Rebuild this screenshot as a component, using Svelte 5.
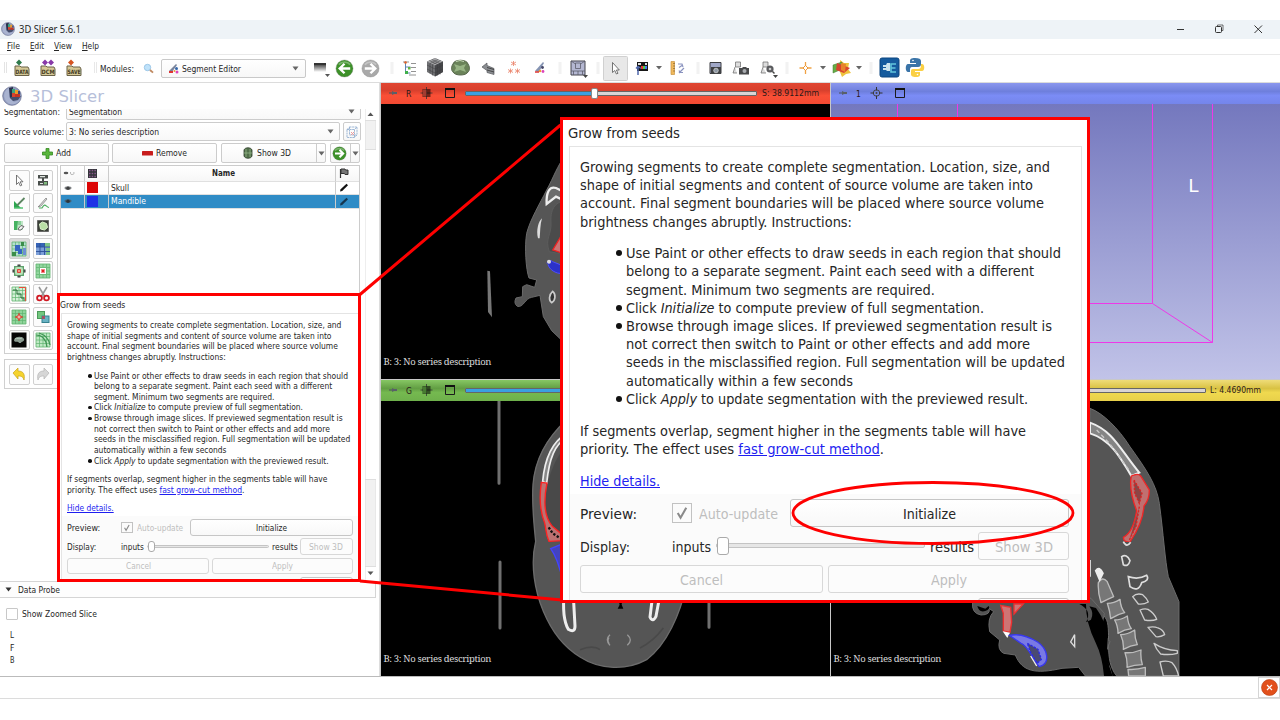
<script>
  const SMALL = 0.5838;

  // Squeezes a run of text horizontally to a given width in pixels.
  function fit(node, width) {
    const natural = node.getBoundingClientRect().width;
    if (!natural) return;
    node.style.transform = `scaleX(${width / natural})`;
    node.style.marginRight = `${width - natural}px`;
  }

  const intro = [
    [470, 'Growing segments to create complete segmentation. Location, size, and'],
    [453, 'shape of initial segments and content of source volume are taken into'],
    [464, 'account. Final segment boundaries will be placed where source volume'],
    [272, 'brightness changes abruptly. Instructions:']
  ];
  const bullets = [
    [435, 'Use Paint or other effects to draw seeds in each region that should', true],
    [408, 'belong to a separate segment. Paint each seed with a different'],
    [309, 'segment. Minimum two segments are required.'],
    [358, 'Click |Initialize| to compute preview of full segmentation.', true],
    [426, 'Browse through image slices. If previewed segmentation result is', true],
    [404, 'not correct then switch to Paint or other effects and add more'],
    [439, 'seeds in the misclassified region. Full segmentation will be updated'],
    [227, 'automatically within a few seconds'],
    [402, 'Click |Apply| to update segmentation with the previewed result.', true]
  ];
  const tools = ['cursor', 'threshold', 'paint', 'draw', 'erase', 'level', 'grow', 'fill', 'margin', 'hollow', 'smooth', 'scissors', 'islands', 'logic', 'mask', 'surface'];
  const segments = [
    { name: 'Skull', color: '#dc0505', w: 18 },
    { name: 'Mandible', color: '#1e32e6', w: 35, sel: true }
  ];
</script>

{#snippet t(text, w)}<span class="t" use:fit={w}>{text}</span>{/snippet}

{#snippet details(u)}
  <div class="details" style="--u:{u}px">
    <div class="d-title">{@render t('Grow from seeds', 112 * u)}</div>
    <div class="d-frame">
      <div class="d-text">
        {#each intro as [w, s]}<div>{@render t(s, w * u)}</div>{/each}
        <div class="d-list">
          {#each bullets as [w, s, dot]}
            <div>{#if dot}<i class="dot"></i>{/if}<span class="t" use:fit={w * u}>{#each s.split('|') as part, i}{#if i === 1}<em>{part}</em>{:else}{part}{/if}{/each}</span></div>
          {/each}
        </div>
        <div>{@render t('If segments overlap, segment higher in the segments table will have', 446 * u)}</div>
        <div><span class="t" use:fit={304 * u}>priority. The effect uses <a href="#method">fast grow-cut method</a>.</span></div>
        <div class="d-hide"><span class="t" use:fit={80 * u}><a href="#details">Hide details.</a></span></div>
      </div>
      <div class="d-row">
        <span class="d-label">{@render t('Preview:', 57 * u)}</span>
        <span class="d-check"><svg viewBox="0 0 19 19"><path d="M5 9.500l3 5L14 4" fill="none" stroke="#8a8a8a" stroke-width="2.200" /></svg></span>
        <span class="d-auto off">{@render t('Auto-update', 79 * u)}</span>
        <span class="d-btn init">{@render t('Initialize', 53 * u)}</span>
      </div>
      <div class="d-row">
        <span class="d-label">{@render t('Display:', 50 * u)}</span>
        {@render t('inputs', 39 * u)}
        <span class="d-slider"><i></i></span>
        <span class="d-res">{@render t('results', 44 * u)}</span>
        <span class="d-btn show off">{@render t('Show 3D', 58 * u)}</span>
      </div>
      <div class="d-row">
        <span class="d-btn cancel off">{@render t('Cancel', 43 * u)}</span>
        <span class="d-btn apply off">{@render t('Apply', 36 * u)}</span>
      </div>
      <div class="d-row last"><span class="d-btn show"></span></div>
    </div>
  </div>
{/snippet}

{#snippet logo(size)}
  <svg width={size} height={size} viewBox="0 0 20 20">
    <circle cx="10" cy="10" r="9.300" fill="#929dc0" stroke="#6d7494" stroke-width=".8" />
    <path d="M3 6a8 8 0 0 1 4-4v9l5 5 6-2a9 9 0 0 1-12 3A9 9 0 0 1 3 6" fill="#a9b3d0" />
    <path d="M7 2l4-1v10l-3 1z" fill="#29304a" /><path d="M8 12l3-2h8l-3 4-5 1z" fill="#454d6b" />
    <path d="M10 7h3v4h-3z" fill="#d6432f" /><path d="M13 4h3v4h-3z" fill="#ec9b28" /><path d="M13 8h5v3h-5z" fill="#c43322" /><path d="M10 3h3v4h-3z" fill="#3aa47d" /><path d="M16 5h2v3h-2z" fill="#3b4878" />
  </svg>
{/snippet}

{#snippet arrowDown()}<svg width="7" height="5" viewBox="0 0 7 5"><path d="M.5.5h6L3.500 4.500z" fill="#666" /></svg>{/snippet}

{#snippet grid(c)}
  <rect x="2" y="2" width="14" height="14" fill={c} /><path d="M2 5.500h14M2 9h14M2 12.500h14M5.500 2v14M9 2v14M12.500 2v14" stroke="#5fb470" stroke-width=".7" /><path d="M2 2h14v14H2z" fill="none" stroke="#5fb470" stroke-width=".8" />
{/snippet}

{#snippet toolIcon(n)}
  <svg width="18" height="18" viewBox="0 0 18 18">
    {#if n === 'cursor'}<path d="M6.500 4v9.500l2.200-2.200 1.600 3.600 1.500-.7-1.600-3.400h2.800z" fill="#fff" stroke="#555" stroke-width=".8" />
    {:else if n === 'threshold'}<path d="M4 4h10v3.500H4zM4 10h10v4.500H4zM8 7h2v3H8z" fill="#4a4f4c" /><path d="M6 5.700h5M6 12.500h3" stroke="#dfe4df" stroke-width="1.200" /><path d="M10 11h3v2.500h-3z" fill="#7fba7d" />
    {:else if n === 'paint'}<path d="M4 7v7h7z" fill="#2ca64f" /><path d="M7 11.500L14.500 4" stroke="#5d8662" stroke-width="1.800" /><path d="M4 14h9" stroke="#56c374" stroke-width="1.500" />
    {:else if n === 'draw'}<path d="M5 12l7-8 1 1-6 7-3 1z" fill="#ddd" stroke="#777" stroke-width=".7" /><path d="M5 14h3c3-6 4-1 7-.5" fill="none" stroke="#4fae62" stroke-width="1.200" />
    {:else if n === 'erase'}<path d="M4 4h9v9H4z" fill="#bfe6c7" /><path d="M4 4h4l-1 9H4z" fill="#46b261" /><path d="M8 4h3v4H8z" fill="#86cf97" /><path d="M8 12l3-3.500 3 1-3 3.500H8.500z" fill="#f2f2f2" stroke="#444" stroke-width=".8" />
    {:else if n === 'level'}<path d="M3.500 3.500h11v11h-11z" fill="#3b4138" stroke="#333" stroke-dasharray="1 1" /><path d="M5.500 7l3-2 4 1.500 1 4-3 2.500-4-1z" fill="#b9e0a5" stroke="#dff3cf" />
    {:else if n === 'grow'}{@render grid('#b5dfd0')}<path d="M5 5h5v4h2v5H8v-3H5z" fill="#3565c0" /><path d="M11 2h3v4h-3zM2 12h4v4H2z" fill="#3b8d4a" /><path d="M13 8h3v7h-3z" fill="#6c8fd4" />
    {:else if n === 'fill'}<path d="M2 3h14v4H2z" fill="#3563b6" /><path d="M2 7h14v8H2z" fill="#7c9fd8" /><path d="M10 3h6v4h-6zM12 8h4v7h-4z" fill="#7fc488" /><path d="M2 7h14M2 11.500h14M6 3v12M10.500 3v12" stroke="#2a5098" stroke-width=".9" />
    {:else if n === 'margin'}<rect x="4.500" y="4.500" width="9" height="9" fill="#b5e4b7" stroke="#5ba66b" /><path d="M9 2.500v2M9 13.500v2M2.500 9h2M13.500 9h2" stroke="#333" stroke-width="3" /><circle cx="9" cy="9" r="5" fill="none" stroke="#6b9473" stroke-width=".7" /><path d="M7.500 7.500h3v3h-3z" fill="#ef9887" stroke="#d22" stroke-width=".8" />
    {:else if n === 'hollow'}{@render grid('#92d69f')}<rect x="5.500" y="5.500" width="7" height="7" fill="#fff" stroke="#6ebc7b" /><path d="M7.500 7.500l3 3M10.500 7.500l-3 3" stroke="#e01c1c" stroke-width="1.500" />
    {:else if n === 'smooth'}{@render grid('#d5f0d8')}<path d="M3 5h4v4h4v4h3v3" fill="none" stroke="#2b6c3b" /><path d="M9 2.500h6.500V16" fill="none" stroke="#ee4a3a" />
    {:else if n === 'scissors'}<path d="M5 2l6 10M13 2L7 12" stroke="#999" stroke-width="1.600" /><circle cx="5.500" cy="13" r="2.400" fill="none" stroke="#d01822" stroke-width="1.800" /><circle cx="12.500" cy="13" r="2.400" fill="none" stroke="#d01822" stroke-width="1.800" />
    {:else if n === 'islands'}{@render grid('#8fd49a')}<path d="M9 5v8M5 9h8" stroke="#e12a1e" /><path d="M9 6.500l2.500 2.500L9 11.500 6.500 9z" fill="#f7b1a6" stroke="#e12a1e" />
    {:else if n === 'logic'}<rect x="3.500" y="3.500" width="7" height="7" fill="#72c67e" stroke="#4a9a58" /><rect x="8" y="8" width="7" height="6.500" fill="#69b3c4" stroke="#35818f" /><path d="M8 8h3v3H8z" fill="#a25264" />
    {:else if n === 'mask'}<rect x="1.500" y="1.500" width="15" height="15" fill="#060606" /><path d="M4 9c1-4 9-4 10-1 1 3-3 2-3 4H9c0-2-5 0-5-3" fill="#8a9a90" /><path d="M5 8c2-2 4 1 7-1" stroke="#b3c9b9" fill="none" />
    {:else}{@render grid('#bfe8c4')}<path d="M2 4c6 0 10 4 11 12M5 2c6 2 10 6 11 12" fill="none" stroke="#3f9453" stroke-width="1.200" />{/if}
  </svg>
{/snippet}

{#snippet greenArrow(size, c, flip)}
  <svg width={size} height={size} viewBox="0 0 20 20"><circle cx="10" cy="10" r="9" fill={c} stroke="#77777755" /><path d="M4 6a8 8 0 0 1 12 0" stroke="#ffffff50" stroke-width="2" fill="none" /><g transform={flip ? 'matrix(-1 0 0 1 20 0)' : ''}><path d="M4 10h11M10 5l5 5-5 5" fill="none" stroke="#fff" stroke-width="2.600" /></g></svg>
{/snippet}

{#snippet viewIcons(letter, color)}
  <svg class="v-icons" width="80" height="20" viewBox="0 0 80 20">
    <path d="M8 10h4" stroke="#4b5158" /><path d="M11 8v4l2-1h3V9h-3z" fill="#596069" />
    <text x="25" y="13.800" font-size="8.500" fill="#2a1818">{letter}</text>
    {#if letter === '1'}
      <circle cx="45.500" cy="10" r="3.200" fill="none" stroke="#444" /><path d="M45.500 4v3.500M45.500 12.500V16M39.500 10H43M48 10h3.500" stroke="#333" /><circle cx="45.500" cy="10" r="1" fill="#444" />
    {:else}
      <path d="M45.500 4v12M39.500 10h12" stroke="#333" stroke-width=".8" /><path d="M41.500 6h8v8h-8z" fill="#00000088" /><path d="M42 6.500h3.500v7H42z" fill={color} />
    {/if}
    <path d="M64.500 5.500h9v9h-9z" fill="none" stroke="#1b1b1b" /><path d="M64 6h10" stroke="#111" stroke-width="2" />
  </svg>
{/snippet}

<div class="app">
  <header class="title">
    <span class="title-logo">{@render logo(14)}</span>
    {@render t('3D Slicer 5.6.1', 62)}
    <svg class="win" width="100" height="18" viewBox="0 0 100 18" fill="none" stroke="#333"><path d="M0 9.500h7" /><rect x="38.500" y="6.500" width="6" height="6" rx="1" /><path d="M40.500 6V5h5.500v5.500h-1" stroke-width=".7" /><path d="M77.500 5.500l7.500 7.500M85 5.500l-7.500 7.500" /></svg>
  </header>
  <nav class="menu">
    <span class="t" use:fit={13}><u>F</u>ile</span><span class="t" use:fit={14}><u>E</u>dit</span><span class="t" use:fit={18}><u>V</u>iew</span><span class="t" use:fit={17}><u>H</u>elp</span>
  </nav>
  <div class="toolbar">
    <svg width="98" height="27" viewBox="0 55 98 27" class="files">
      <path d="M4.500 62v11M6.500 62v11" stroke="#e4e4e4" />
      {#each [[15, 'DATA', '#2f7a4c', 0], [41, 'DCM', '#8839a8', 1], [67, 'SAVE', '#d65522', 0]] as [x, label, c, two]}
        <path d="M{x} 66h5l1 1h7l1 2v6.500H{x}z" fill="#d5c896" stroke="#6b6348" />
        <path d="M{x + 4} 59.500l3 3-3 3-3-3z" fill={c} />
        {#if two}<path d="M{x + 10} 59.500l3 3-3 3-3-3z" fill={c} />{/if}
        <text x={x + .5} y="74.200" font-size="6" font-weight="bold" textLength="13" lengthAdjust="spacingAndGlyphs" fill="#3e3822">{label}</text>
      {/each}
      <path d="M94.500 62v11M96.500 62v11" stroke="#e8e8e8" />
    </svg>
    <span class="modules">{@render t('Modules:', 34)}</span>
    <svg width="12" height="12" viewBox="0 0 12 12"><circle cx="4.500" cy="4.500" r="3.200" fill="#bfe2fa" stroke="#9bc7e8" /><path d="M7 7l3 2.700" stroke="#c08a62" stroke-width="1.800" /></svg>
    <div class="module-combo">
      <svg width="11" height="11" viewBox="0 0 11 11"><path d="M1 8l7-7 1 1-5 7z" fill="#78839c" /><path d="M1 9h4" stroke="#d33" stroke-width="2" /><circle cx="8.500" cy="5.500" r="1.500" fill="#36a" /><circle cx="9" cy="9" r="1.500" fill="#d4b" /><circle cx="6.500" cy="8" r="1" fill="#e93" /></svg>
      {@render t('Segment Editor', 59)}
      <span class="push">{@render arrowDown()}</span>
    </div>
    <svg width="28" height="27" viewBox="306 55 28 27"><defs><linearGradient id="hist" x2="0" y2="1"><stop offset="0" stop-color="#222" /><stop offset="1" stop-color="#fff" /></linearGradient></defs><path d="M314 63h12v9h-12z" fill="url(#hist)" /><path d="M314 63h12v2h-12z" fill="#333" /><path d="M325 74h5l-2.500 3z" fill="#555" /></svg>
    <span class="round">{@render greenArrow(19, '#3d9129', true)}</span>
    <span class="round two">{@render greenArrow(19, '#a9a9a9', false)}</span>
    <svg width="545" height="27" viewBox="384 55 545 27" class="icons">
      <path d="M392 62v12M560 62v12M598 62v12M698 62v12M787 62v12M871 62v12" stroke="#f2f2f2" stroke-width="3" />
      <!-- data tree -->
      <path d="M405.500 62v11h5M405.500 67h5" stroke="#5c84b2" fill="none" /><path d="M403 62h6M411 63.500h5M411 67.500h5M411 71.500h5M409 75h7" stroke="#777" stroke-width=".8" /><path d="M408 67h2.500v2.500H408z" fill="#62b43e" /><path d="M405 71h3v3h-3z" fill="#3fb04a" /><circle cx="405.500" cy="62.500" r="1.300" fill="#e0622b" />
      <!-- volume cube -->
      <path d="M435 58l8 3.500v10.500l-8 4.500-8-4.500V61.500z" fill="#6f7073" /><path d="M435 58l8 3.500-8 4-8-4z" fill="#a4a5a7" /><path d="M435 65.500v11l8-4.500V61.500z" fill="#46474a" /><path d="M429.500 60.500l8 4v11M432 59.500l8 4v11M427 65l8 4 8-4M427 69l8 4 8-4M440.500 60.500l-8 4v11M438 59.500l-8 4v10" stroke="#3a3b3d" stroke-width=".5" fill="none" />
      <!-- model -->
      <path d="M453 64c1-5 14-5 15 0 2 3 2 6 0 8-2 4-13 4-15 0-2-2-2-5 0-8z" fill="#6a8359" stroke="#56664b" /><path d="M454 64l6 2 6-2-2 4 2 4-6-2-6 2 2-4z" fill="#a3c18f" opacity=".8" /><path d="M456 61.500q4-2 8 0" stroke="#c9ddba" fill="none" />
      <!-- transforms -->
      <path d="M482 67l5-4v2.500l7 3v6l-7-2v-2z" fill="#8b8e92" stroke="#56585c" stroke-width=".7" /><path d="M487 67.500l7 2M487 70l7 2" stroke="#333" stroke-width=".8" />
      <!-- markups -->
      <path d="M513.500 61v5M511 62l5 3M511 65l5-3M510.500 68.500v5M508 69.500l5 3M508 72.500l5-3M517.500 68.500v5M515 69.500l5 3M515 72.500l5-3" stroke="#ea8067" stroke-width=".8" />
      <!-- segment editor -->
      <path d="M535 71l8-9 1 1-5 9z" fill="#8594b3" /><path d="M535 72h4" stroke="#d33" stroke-width="1.500" /><circle cx="542.500" cy="67.500" r="1.400" fill="#446" /><circle cx="543" cy="71.500" r="1.400" fill="#d4b" /><circle cx="540" cy="71" r="1.300" fill="#e93" />
      <!-- layout -->
      <path d="M571 61h14v14h-14z" fill="#b4b7d2" stroke="#44454e" /><path d="M573.500 71v4M582.500 71v4M578 71v4M571 71h14M575.500 63h5v5.500h-5zM571 61l4.500 3M585 61l-4.500 3" stroke="#5c5d6b" stroke-width=".8" fill="none" /><path d="M583 75h5l-2.500 3z" fill="#444" />
      <!-- mouse mode -->
      <rect x="603.500" y="56.500" width="24" height="24" rx="1" fill="#e8e8e8" stroke="#d0d0d0" /><path d="M612.500 62.500v10l2.300-2 1.600 3.500 1.600-.7-1.600-3.300h2.900z" fill="#fff" stroke="#555" stroke-width=".8" />
      <!-- window level -->
      <path d="M637 62h11v9h-11z" fill="#161616" /><path d="M638 63h3v2h-3zM645 63h2v2h-2z" fill="#ddd" /><path d="M641 66h2v3h-2z" fill="#e33" /><path d="M643 66h2v3h-2z" fill="#5c4" /><path d="M645 66h2v3h-2z" fill="#47e" /><path d="M638 67v8M636 68.500l2-2 3 2" stroke="#5068ac" stroke-width="1.500" fill="none" /><path d="M656 66h6l-3 3.500z" fill="#666" />
      <!-- ruler -->
      <path d="M671 61.500h3.500v13H671z" fill="#f0b95c" stroke="#c99440" stroke-width=".7" /><path d="M673 63.500h2M673 66h2M673 68.500h2M673 71h2" stroke="#8a6731" stroke-width=".7" /><path d="M678 64h4l1 3M683 72.500h-3l-1-2M679 67.500l3-2M679 73l5-5" stroke="#8a93bf" stroke-width="1.200" fill="none" />
      <!-- capture -->
      <path d="M710 62.500h11v11h-11z" fill="#a0a7c7" stroke="#3c3d41" /><path d="M711 67h10v7h-10z" fill="#3e4043" /><circle cx="716" cy="70.500" r="2.300" fill="#8f99a5" stroke="#ddd" stroke-width=".7" />
      <!-- scene views -->
      <path d="M735.500 62h5v5h-5zM735 67l-2 6h4" fill="#ddd" stroke="#666" stroke-width=".7" /><path d="M739 68h3l1-1h3l1 1h2v6.500h-10z" fill="#48494b" /><circle cx="744.500" cy="71" r="2" fill="#a9acb0" />
      <path d="M763 62h5v5h-5zM763 67l-2 6h5" fill="#ddd" stroke="#666" stroke-width=".7" /><circle cx="770" cy="69" r="3.600" fill="#5a5b5e" /><circle cx="770" cy="69" r="1.300" fill="#ccc" /><path d="M772.500 71.500l2 2" stroke="#444" stroke-width="1.500" /><path d="M773 75h5l-2.500 3z" fill="#444" />
      <!-- crosshair -->
      <path d="M805.500 62v12M799.500 68h12" stroke="#f0a244" stroke-width="1.300" /><path d="M805.500 65.500l2.500 2.500-2.500 2.500-2.500-2.500z" fill="#fff" stroke="#eb8f26" stroke-width=".9" /><path d="M820 66h6l-3 3.500z" fill="#666" />
      <!-- slice cube -->
      <path d="M840 60l4 3 5 0-1 6 3 4-5 1-4 3-2-5z" fill="#eec23d" /><path d="M833 65l9-3v7l-9 4z" fill="#66ad45" stroke="#417b32" stroke-width=".5" /><path d="M837 63l13 5-6 5-8-3z" fill="#d8442f" /><path d="M841 63l5 1-1 8-4-2z" fill="#e7832c" /><path d="M856 66h6l-3 3.500z" fill="#666" />
      <!-- extensions -->
      <rect x="880" y="58" width="19" height="19" rx="2" fill="#155b9e" stroke="#0d4680" /><path d="M883 65h3l1-2h3v8h-3l-1-1h-3v-2h3v-1h-3z" fill="#cbe4ee" /><path d="M896 64h-5v8h5M891 68h4.500" stroke="#61c6dc" stroke-width="1.600" fill="none" />
      <!-- python -->
      <path d="M915 58c-4 0-5 1-5 3v2h6v1h-8c-3 0-3 8 0 8h2v-2c0-3 1-3 3-3h5c2 0 3-1 3-3v-3c0-2-2-3-6-3z" fill="#3a74a8" /><path d="M916 77c4 0 4-1 4-3v-2h-5v-1h7c3 0 3-7 0-7h-1v2c0 2-1 3-3 3h-5c-2 0-2 1-2 3v2c0 2 1 3 5 3z" fill="#fbd044" /><circle cx="913" cy="60.500" r=".8" fill="#fff" /><circle cx="917.500" cy="74.500" r=".8" fill="#fff" />
    </svg>
  </div>

  <main>
    <aside>
      <div class="brand">{@render logo(20)}<span class="brand-name">{@render t('3D Slicer', 74)}</span></div>
      <div class="scroll">
        <div class="panel">
          <div class="seg-row"><span class="lbl">{@render t('Segmentation:', 56)}</span><div class="combo clip">{@render t('Segmentation', 53)}<span class="push">{@render arrowDown()}</span></div></div>
          <div class="src-row"><span class="lbl">{@render t('Source volume:', 60)}</span><div class="combo">{@render t('3: No series description', 90)}<span class="push">{@render arrowDown()}</span></div>
            <div class="btn geo"><svg width="12" height="12" viewBox="0 0 12 12" fill="none"><path d="M1 3.500h7.500v8H1zM3.500 1H11v8l-2.500 2.500M1 3.500L3.500 1M8.500 3.500L11 1M3.500 1v8H11" stroke="#86a6cc" stroke-width=".8" stroke-dasharray="2 .6" /><path d="M5 6l3 3M8 6L5 9" stroke="#e99" /></svg></div></div>
          <div class="actions">
            <div class="btn add"><svg width="11" height="11" viewBox="0 0 11 11"><path d="M4 .5h3V4h3.500v3H7v3.500H4V7H.5V4H4z" fill="#59b53c" stroke="#358a22" stroke-width=".8" /></svg>{@render t('Add', 15)}</div>
            <div class="btn remove"><svg width="11" height="5" viewBox="0 0 11 5"><rect width="11" height="4.500" rx=".6" fill="#c81d1d" /></svg>{@render t('Remove', 31)}</div>
            <div class="btn show3d"><span class="show3d-in"><svg width="10" height="12" viewBox="0 0 10 12"><path d="M1 3c1-3 7-3 8 0v6c-1 3-7 3-8 0z" fill="#52704a" stroke="#2f3d2b" stroke-width=".8" /><path d="M3 2v8M7 2v8M1 6h8" stroke="#9cbb90" stroke-width=".7" /></svg>{@render t('Show 3D', 34)}</span><span class="drop">{@render arrowDown()}</span></div>
            <div class="btn go"><span class="go-in">{@render greenArrow(15, '#3d9129', false)}</span><span class="drop">{@render arrowDown()}</span></div>
          </div>
          <div class="editor">
            <div class="palette">
              <div class="tools">{#each tools as n}<div class="tool" class:on={n === 'grow'}>{@render toolIcon(n)}</div>{/each}</div>
              <div class="history">
                <div class="tool"><svg width="18" height="18" viewBox="0 0 18 18"><path d="M3 8l5-5v3c6 0 7 4 6 9-1-3-2-4-6-4v3z" fill="#f5d32e" stroke="#c9a417" stroke-width=".7" /></svg></div>
                <div class="tool"><svg width="18" height="18" viewBox="0 0 18 18"><path d="M15 8l-5-5v3c-6 0-7 4-6 9 1-3 2-4 6-4v3z" fill="#d6d6d6" stroke="#b5b5b5" stroke-width=".7" /></svg></div>
              </div>
            </div>
            <div class="table">
              <div class="tr th">
                <span><svg width="13" height="8" viewBox="0 0 13 8"><ellipse cx="3" cy="4" rx="2.300" ry="1.300" fill="#555" /><path d="M7.500 3v1.500q0 1 1.700 1t1.700-1V3" fill="none" stroke="#999" stroke-width=".7" /></svg></span>
                <span><svg width="9" height="9" viewBox="0 0 9 9"><path d="M0 0h9v9H0z" fill="#33353a" /><path d="M1 1.500h7M1 4.500h7M1 7.500h7" stroke="#8a5a8c" stroke-dasharray="1.500 1.200" stroke-width="1.300" /></svg></span>
                <span class="name"><b class="t" use:fit={23}>Name</b></span>
                <span class="st"><svg width="10" height="10" viewBox="0 0 10 10"><path d="M1.500 1v9" stroke="#333" stroke-width="1.200" /><path d="M2 1h4l.5 1H9v4.500H6L5.500 5.500H2z" fill="#777" stroke="#333" /></svg></span>
              </div>
              {#each segments as s}
                <div class="tr" class:sel={s.sel}>
                  <span class="eye"><svg width="8" height="6" viewBox="0 0 8 6"><ellipse cx="4" cy="3" rx="3.500" ry="1.800" fill="#4a4e52" opacity=".7" /><circle cx="4" cy="3.200" r="1.700" fill="#222" opacity=".7" /></svg></span>
                  <span class="sw"><i style="background:{s.color}"></i></span>
                  <span class="cell">{@render t(s.name, s.w)}</span>
                  <span class="st"><svg width="10" height="9" viewBox="0 0 10 9"><path d="M1 8.500l.6-2.200L7.500.8 9 2.200 3.200 7.900z" fill={s.sel ? '#143650' : '#111'} /></svg></span>
                </div>
              {/each}
            </div>
          </div>
        </div>
        <div class="bar"><svg width="11" height="472" viewBox="0 0 11 472"><path d="M0 0v472" stroke="#ddd" /><path d="M2.500 7h6L5.500 3.500z" fill="#555" /><path d="M0 11.500h11v29H0zM0 370.500h11v87H0z" fill="#f1f1f1" stroke="#dedede" /><path d="M2.500 462.500h6l-3 3.500z" fill="#555" /></svg></div>
      </div>
      <div class="probe"><svg width="7" height="5" viewBox="0 0 7 5"><path d="M.5.5h6l-3 4z" fill="#333" /></svg>{@render t('Data Probe', 42)}</div>
      <div class="zoomed"><i></i>{@render t('Show Zoomed Slice', 75)}</div>
      <div class="lfb"><div>{@render t('L', 4)}</div><div>{@render t('F', 4.5)}</div><div>{@render t('B', 4.5)}</div></div>
    </aside>

    <section class="views">
      <div class="view">
        <div class="vbar red">{@render viewIcons('R', '#a33c30')}<span class="track"><i class="fillr"></i><i class="knob"></i></span>{@render t('S: 38.9112mm', 57)}</div>
        <svg class="scene" width="449" height="275" viewBox="381 104 449 275">
          <rect x="381" y="104" width="449" height="275" />
          <g transform="translate(380 80) scale(.33333)">
            <path d="M560 220C530 260 522 290 500 330C480 370 450 420 440 460 433 500 438 570 447 594L470 600 464 622 440 614 428 620 427 650 408 654Q400 670 412 679C430 684 435 655 455 652L480 646 490 710 515 752 560 795z" fill="#565656" stroke="#6a6a6a" stroke-width="3" />
            <path d="M560 365c-30-5-50 20-47 60s-20 50-5 90l52 10z" fill="#4b4b4b" stroke="#5c5c5c" stroke-width="3" />
            <path d="M500 372c-2-38 10-54 28-48l30 15v25l-30-14z" fill="#6c6c6c" stroke="#eee" stroke-width="7" />
            <path d="M474 475c-6-25 1-50 12-60-6 20-5 40-7 60z" fill="#ddd" />
            <path d="M518 510l30-50v60z" fill="#cd7474" stroke="#e22" stroke-width="4" />
            <path d="M500 549q10-12 18-4l30 12v24c-22 0-40-12-44-28" fill="#2c32c9" stroke="#4c4cff" stroke-width="3" /><circle cx="507" cy="545" r="6" fill="#ddd" />
            <path d="M518 634c-12 10-12 28-3 34 12-6 13-26 3-34z" fill="#333" stroke="#ccc" stroke-width="5" />
            <path d="M322 572l8 2 6 138-12-16z" fill="#777" />
          </g>
          <text x="383.500" y="365" class="vtext" textLength="108">B: 3: No series description</text>
        </svg>
      </div>
      <div class="view">
        <div class="vbar blue">{@render viewIcons('1', '')}</div>
        <svg class="scene" width="449" height="275" viewBox="831 104 449 275">
          <defs><linearGradient id="sky" x2="0" y2="1"><stop offset="0" stop-color="#7478be" /><stop offset="1" stop-color="#c1c3e8" /></linearGradient></defs>
          <rect x="831" y="104" width="449" height="275" fill="url(#sky)" />
          <path d="M897.500 104v160M957.500 104v160M1152.500 104v199.500H957M1212.500 104v238.500H897M1152.500 303.500l60 39" fill="none" stroke="#ee38e8" />
          <text x="1188.500" y="191.500" font-size="19" fill="#fff" class="orient">L</text>
        </svg>
      </div>
      <div class="view">
        <div class="vbar green">{@render viewIcons('G', '#477a31')}<span class="track"><i class="fillg"></i></span></div>
        <svg class="scene" width="449" height="275" viewBox="381 401 449 275">
          <rect x="381" y="401" width="449" height="275" />
          <g transform="translate(380 378) scale(.33333)">
            <path d="M560 125C500 180 465 240 459 320 455 380 462 440 467 490 450 560 465 640 490 700 515 760 555 810 600 837 660 876 740 878 800 845 860 800 900 710 920 620V80z" fill="#555" stroke="#6c6c6c" stroke-width="4" />
            <path d="M560 205c-35 30-60 100-64 160s15 100 50 110h50V180z" fill="#494949" />
            <path d="M560 180c-35 18-52 60-60 135l-12-4c6-70 30-120 72-145" fill="#888" stroke="#eee" stroke-width="5" />
            <path d="M484 313l17 2c-10 50-10 100 16 130l30 25v18l-40 2c-10-20-8-35-13-55-16-40-16-80-10-122z" fill="#bd7272" stroke="#f22" stroke-width="4" />
            <path d="M506 448l12 18 22 14" stroke="#111" stroke-width="7" stroke-dasharray="7 5" fill="none" />
            <path d="M512 512l40-16v120c-15-50-22-80-40-104z" fill="#4343bf" stroke="#44f" stroke-width="4" />
            <path d="M553 640c-5 50-2 90 12 114q20 12 20-10l-5-90M842 640l-14 75q-10 20-18 2l8-65 10-30" fill="none" stroke="#eee" stroke-width="9" />
            <path d="M715 665l4 15-6 12h17l-5-12 2-15z" fill="#000" /><path d="M690 770q-16 14 0 32M742 770q18 16 0 32M687 778q-6 10 0 18" fill="none" stroke="#999" stroke-width="4" />
            <path d="M600 815q40-15 60 0M780 810q40-20 70-60" fill="none" stroke="#494949" stroke-width="5" />
            <path d="M357 68v248M360 552v198M987 650v98" stroke="#707070" stroke-width="9" stroke-linecap="round" />
          </g>
          <text x="383.500" y="662" class="vtext" textLength="108">B: 3: No series description</text>
        </svg>
      </div>
      <div class="view">
        <div class="vbar yellow"><span class="track"></span>{@render t('L: 4.4690mm', 51)}</div>
        <svg class="scene" width="449" height="275" viewBox="831 401 449 275">
          <rect x="831" y="401" width="449" height="275" />
          <g transform="translate(930 400) scale(.33333)">
            <path d="M480 25C520 40 565 85 600 140 650 210 680 255 688 310 700 400 705 480 715 530L747 605V828H560C520 780 545 700 530 660 515 630 490 610 470 580z" fill="#555" stroke="#6b6b6b" stroke-width="3" />
            <path d="M128 605q-5 35 25 40 30 0 24-20l14 10q-20 20-12 60l30 25q-8 30 12 40l35 5c20 50 60 58 140 40l50-3 20 26h80q-5-30-18-48-2-30 12-55l-22-25q-5-30 5-60l-40-45z" fill="#535353" stroke="#6a6a6a" stroke-width="3" />
            <path d="M480 68c70 25 90 80 148 150l-24 10c-35-60-65-110-124-128z" fill="#858585" stroke="#eee" stroke-width="6" /><path d="M500 90l40 42 60 82" stroke="#c8c8c8" stroke-width="4" stroke-dasharray="12 8" fill="none" />
            <path d="M604 228q20-10 28 0l26 42q0 30-16 48-3 50-42 108-20 2-20-14 30-15 40-80-20-50-18-90z" fill="#c07070" stroke="#ef2626" stroke-width="4" /><path d="M612 240l24 40-8 30-14-30zM628 320l-10 60-20 40" fill="#8c4444" stroke="#d22" stroke-width="4" stroke-dasharray="6 5" />
            <path d="M580 425q10 20 22 2M575 470q15-10 25 12-5 20-20 12zM595 530q30 10 55-4 10 15-15 22-10 30-35 12z" fill="#505050" stroke="#ddd" stroke-width="5" />
            <g fill="#777" stroke="#bdbdbd" stroke-width="4" stroke-linejoin="round"><path d="M505 548q12-20 26-4l20 46q-18 8-38 18-10-30-8-60zM532 610q20 0 38-12 2 25 14 40-20 4-42 18-2-22-10-46zM554 660q20 0 38-12 2 25 12 38-20 2-40 14 0-22-10-40zM572 704q20 0 42-14 0 25 8 44-20 2-42 14 2-22-8-44zM585 758q24 2 48-8-2 25 4 44-24 0-46 8 2-22-6-44zM594 808q24 2 52-6v26h-50z" /><path d="M608 590q12-12 30-6 12 10 17 22-14 8-30 6zM630 630q14-6 24-2 20 12 26 30-14 6-36 2zM654 682q18-4 30 2 16 6 20 20-14 8-26 6zM672 730q30 20 70 22v8q-24 6-50 2-14-14-20-32zM690 786q20-6 36 2 14 14 20 40h-46z" fill="#505050" stroke="#ccc" /></g>
            <path d="M497 512q12-16 22 8l-10 20zM480 480v50" fill="#eee" stroke="#eee" stroke-width="5" />
            <path d="M448 612q40 20 20 55l15-8q10-20-5-40l20 5q30 40 35 90-8 60 15 114h-26q-5-60-25-100-30-60-29-116z" fill="#000" />
            <path d="M212 616l30 6 3 45-5 30-20-4V640zM252 612h28l-28 30z" fill="#cf7474" stroke="#ee3030" stroke-width="4" /><path d="M218 694l22 4-8 16z" fill="#fff" />
            <path d="M238 706c30-6 60 5 85 20 30 20 40 65 5 74-15-15-35-65-55-70z" fill="#7979e5" stroke="#3838ef" stroke-width="4" /><path d="M292 730l32 18 10 30-12 12-20-32z" fill="#4a4a72" stroke="#2929e8" stroke-width="4" stroke-dasharray="7 4" /><path d="M302 768l18 30" stroke="#eee" stroke-width="4" />
            <path d="M434 704l-12 22 12 14z" fill="none" stroke="#ddd" stroke-width="4" /><path d="M142 618q5 22 26 14 14-6 8-14l-10 8z" fill="#000" />
          </g>
          <text x="833.500" y="662" class="vtext" textLength="108">B: 3: No series description</text>
        </svg>
      </div>
    </section>
  </main>
  <footer><div class="err"><svg width="17" height="17" viewBox="0 0 17 17"><circle cx="8.500" cy="8.500" r="8" fill="#e2501b" stroke="#b23d12" stroke-width=".6" /><path d="M6 6l5 5M11 6l-5 5" stroke="#fff" stroke-width="1.200" /></svg></div></footer>

  <div class="source-box">{@render details(SMALL)}</div>
  <div class="callout">{@render details(1)}</div>
  <svg class="marks" width="1280" height="720" fill="none" stroke="#fe0000"><path d="M360 294.500L560.500 125M360 581L562 600" stroke-width="3" /><ellipse cx="933" cy="513" rx="140" ry="30.500" stroke-width="2.800" /></svg>
</div>

<style>
  :global(body) { background: #fff; }
  .app { position: relative; width: 1280px; height: 720px; padding-top: 20px; box-sizing: border-box; overflow: hidden; background: #fff; color: #262626; font: 8.4px/12px 'DejaVu Sans Condensed', 'DejaVu Sans', sans-serif; }
  svg { display: block; flex: none; }
  .t { display: inline-block; white-space: pre; transform-origin: 0 50%; flex: none; }
  .push { margin-left: auto; }
  .title { display: flex; align-items: center; height: 18.500px; background: #eef3f7; font: 10.200px 'Noto Sans', sans-serif; }
  .title-logo { margin: 0 4px 0 1px; }
  .win { margin-left: auto; margin-right: 3px; }
  .menu { display: flex; align-items: center; gap: 10px; height: 15.500px; padding-left: 7px; }
  u { text-underline-offset: 1px; }
  .toolbar { display: flex; align-items: center; height: 27px; border-top: 1px solid #e9e9e9; border-bottom: 1px solid #dcdcdc; }
  .modules { width: 34px; margin: 0 9px 0 2px; }
  .module-combo { display: flex; align-items: center; gap: 3px; box-sizing: border-box; width: 145px; height: 19px; margin-left: 6px; padding: 0 6px; border: 1px solid #c9c9c9; border-radius: 2px; background: linear-gradient(#fff, #f7f7f7); }
  .round { margin: 0 0 1px 1px; }
  .round.two { margin: 0 4px 1px 7px; }
  main { display: flex; height: 593px; }
  aside { width: 380px; box-sizing: border-box; border-right: 1px solid #ddd; flex: none; }
  .brand { display: flex; align-items: center; gap: 8px; height: 26px; padding-left: 2px; color: #b7bfda; font: 16.5px 'DejaVu Sans', sans-serif; }
  .scroll { display: flex; height: 472px; overflow: hidden; }
  .panel { width: 356.500px; padding-left: 4px; flex: none; overflow: hidden; }
  .bar { margin-left: 4px; }
  .lbl { width: 62px; flex: none; }
  .seg-row { display: flex; align-items: center; height: 15px; margin-top: -5px; }
  .src-row { display: flex; align-items: center; height: 19px; margin-top: 3px; }
  .combo { display: flex; align-items: center; flex: 1; box-sizing: border-box; height: 19px; padding: 0 5px 0 2px; border: 1px solid #ccc; border-radius: 2px; background: linear-gradient(#fff, #f8f8f8); }
  .clip { height: 17px; }
  .btn { display: flex; align-items: center; justify-content: center; gap: 3px; box-sizing: border-box; height: 20px; border: 1px solid #ccc; border-radius: 2px; background: linear-gradient(#fff, #f7f7f7); }
  .geo { width: 18px; height: 19px; margin-left: 3px; }
  .actions { display: flex; gap: 3.500px; margin-top: 2px; }
  .add, .remove { width: 105px; }
  .show3d { width: 105.500px; align-items: stretch; }
  .show3d-in, .go-in { display: flex; flex: 1; gap: 4px; align-items: center; justify-content: center; }
  .go { width: 31px; align-items: stretch; }
  .drop { width: 8px; display: flex; align-items: center; justify-content: center; border-left: 1px solid #ccc; }
  .editor { display: flex; gap: 2.500px; margin-top: 2px; }
  .palette { width: 53.500px; }
  .tools, .history { display: grid; grid-template-columns: 20.500px 20.500px; gap: 2.300px 3px; padding: 4px; border: 1px solid #d0d0d0; }
  .tools { height: 179px; align-content: start; }
  .history { margin-top: 5px; height: 20px; }
  .tool { display: flex; align-items: center; justify-content: center; box-sizing: border-box; height: 20.500px; border: 1px solid #d0d0d0; border-radius: 2px; background: #fcfcfc; }
  .tool.on { background: #dcdcdc; }
  .table { width: 300px; height: 400px; box-sizing: border-box; border: 1px solid #ccc; }
  .tr { display: grid; grid-template-columns: 24px 24px 227px 1fr; height: 13.500px; align-items: stretch; }
  .tr > span { display: flex; align-items: center; border-right: 1px solid #ccc; border-bottom: 1px solid #e0e0e0; padding-left: 2px; }
  .tr > span:last-child { border-right: 0; }
  .tr.th { height: 15.500px; background: linear-gradient(#fff, #f6f6f6); }
  .th > span:nth-child(2) { justify-content: center; padding: 0 8px 0 0; }
  .tr > .name { justify-content: center; }
  .tr > .st { padding-left: 3px; }
  .tr > .eye { padding-left: 3px; }
  .sw i { width: 11px; height: 11px; }
  .sel { background: #308cc6; color: #fff; }
  .probe { display: flex; align-items: center; gap: 6px; box-sizing: border-box; width: 376px; height: 17px; padding-left: 5px; border: 1px solid #d5d5d5; border-left: 0; background: #fdfdfd; }
  .zoomed { display: flex; align-items: center; gap: 4px; margin-top: 10px; padding-left: 6px; }
  .zoomed i { width: 10px; height: 10px; border: 1px solid #c8c8c8; border-radius: 1px; }
  .lfb { margin: 9px 0 0 10px; line-height: 12.500px; }
  .views { display: grid; grid-template-columns: 449px 449px; grid-template-rows: 296px 296px; gap: 1px; padding-left: .5px; background: #c8c8c8; width: 899.500px; }
  .view { overflow: hidden; }
  .vbar { display: flex; align-items: center; height: 20.500px; box-sizing: border-box; color: #2a1818; }
  .v-icons { margin-right: 4px; }
  .red { background: linear-gradient(#e04632, #d8402d 35%, #fa4f36 60%, #f24a33); }
  .green { background: linear-gradient(#87c764, #629e43 40%, #75b950 60%, #6eb04b); }
  .blue { background: linear-gradient(#8b97ee, #6e7fdc 40%, #7b8cf6 60%, #7485ea); }
  .yellow { background: linear-gradient(#efdc78, #d9c243 40%, #f0d94f 60%, #e8d04a); }
  .track { position: relative; box-sizing: border-box; width: 292px; height: 4.500px; margin-right: 5px; border: 1px solid #666; border-radius: 1px; background: #d9d4d4; }
  .fillr, .fillg { display: block; height: 2.500px; width: 128px; background: #3aa0e2; }
  .fillg { width: 200px; }
  .knob { position: absolute; left: 125px; top: -4px; width: 5px; height: 9px; border: 1px solid #888; border-radius: 2px; background: #fff; }
  .yellow .track { width: 291px; margin: 0 4px 0 84px; }
  .vtext { font: 9.500px 'Noto Serif', 'Liberation Serif', serif; fill: #dadada; }
  .orient { font-family: 'Liberation Sans', sans-serif; }
  footer { display: flex; justify-content: flex-end; height: 23px; box-sizing: border-box; border-top: 1px solid #bbb; border-bottom: 1px solid #dcdcdc; }
  .err { display: flex; align-items: center; justify-content: center; width: 20px; border: 1px solid #d5d5d5; }
  .source-box, .callout { position: absolute; box-sizing: border-box; border: 3px solid #fe0000; background: #fff; overflow: hidden; }
  .source-box { left: 57px; top: 293px; width: 304px; height: 289px; }
  .source-box .details { margin: 2px 0 0 -2.500px; }
  .callout { left: 560px; top: 117px; width: 530px; height: 486px; }
  .marks { position: absolute; left: 0; top: 0; }
  .details { font-size: calc(14 * var(--u)); line-height: calc(18.2 * var(--u)); width: calc(524 * var(--u)); }
  .d-title { height: calc(26 * var(--u)); line-height: calc(27 * var(--u)); padding-left: calc(5 * var(--u)); }
  .d-frame { box-sizing: border-box; width: calc(513 * var(--u)); height: calc(470 * var(--u)); margin-left: calc(6 * var(--u)); padding: calc(12 * var(--u)) 0 0 calc(11 * var(--u)); background: linear-gradient(#fff 0 calc(348 * var(--u)), #fbfbfb 0); box-shadow: inset 0 0 0 1px #e4e4e4; }
  .d-text > div { height: calc(18.2 * var(--u)); white-space: nowrap; }
  .d-text > .d-list { height: auto; margin: calc(13.5 * var(--u)) 0 calc(14 * var(--u)); padding-left: calc(46 * var(--u)); }
  .d-list > div { position: relative; height: calc(18.2 * var(--u)); }
  .dot { position: absolute; left: calc(-10.5 * var(--u)); top: calc(6 * var(--u)); width: calc(6 * var(--u)); height: calc(6 * var(--u)); border-radius: 50%; background: #111; }
  .d-text > .d-hide { margin: calc(13.2 * var(--u)) 0 calc(9 * var(--u)); }
  a { color: #1e1ef0; }
  .d-row { display: flex; align-items: center; height: calc(28 * var(--u)); width: calc(489 * var(--u)); margin-bottom: calc(5 * var(--u)); }
  .d-row .t { position: relative; top: calc(1 * var(--u)); }
  .d-label { width: calc(92 * var(--u)); flex: none; }
  .d-check { box-sizing: border-box; width: calc(20 * var(--u)); height: calc(20 * var(--u)); border: 1px solid #c2c2c2; }
  .d-auto { margin-left: calc(7 * var(--u)); }
  .off { color: #bebebe; }
  .d-btn { display: flex; align-items: center; justify-content: center; box-sizing: border-box; height: calc(28 * var(--u)); border: 1px solid #c6c6c6; border-radius: 3px; background: linear-gradient(#fff, #f8f8f8); }
  .d-btn.off { border-color: #d8d8d8; background: #fcfcfc; }
  .init, .show { margin-left: auto; }
  .init { width: calc(279 * var(--u)); }
  .show { width: calc(91 * var(--u)); }
  .cancel { width: calc(243 * var(--u)); }
  .apply { width: calc(241 * var(--u)); margin-left: auto; }
  .d-slider { display: flex; align-items: center; width: calc(209 * var(--u)); margin: 0 calc(5 * var(--u)); height: calc(5 * var(--u)); box-sizing: border-box; border: 1px solid #c4c4c4; border-radius: 2px; background: #e6e6e6; }
  .d-slider i { box-sizing: border-box; width: calc(12 * var(--u)); height: calc(18 * var(--u)); border: 1px solid #aaa; border-radius: 3px; background: #fff; }
</style>
